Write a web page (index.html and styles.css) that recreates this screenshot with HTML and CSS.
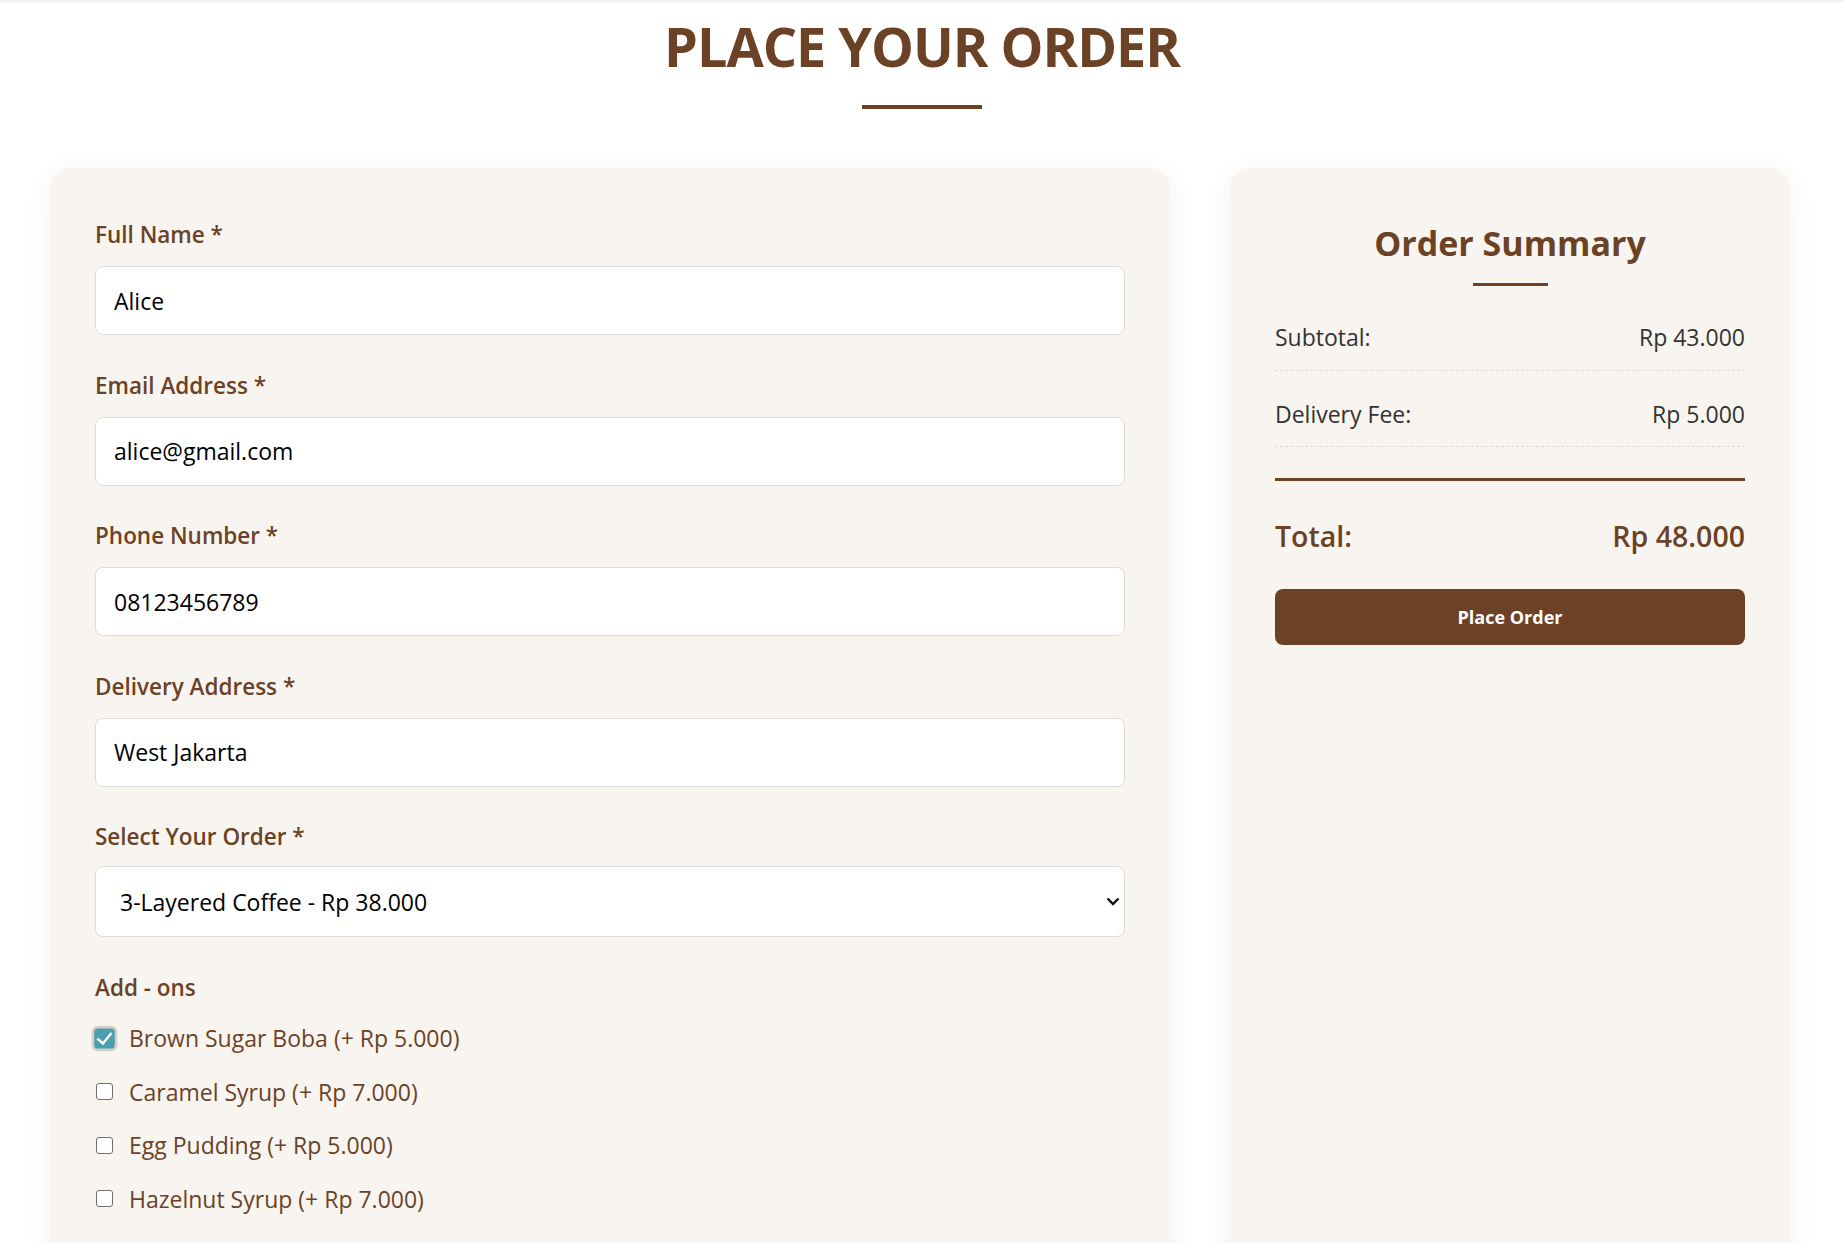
FILE: index.html
```html
<!DOCTYPE html>
<html lang="en">
<head>
<meta charset="utf-8">
<title>Place Your Order</title>
<link rel="stylesheet" href="styles.css">
</head>
<body>
<div class="topbar"></div>
<header class="page-head">
  <h1 class="page-title">PLACE YOUR ORDER</h1>
  <div class="title-rule"></div>
</header>
<main class="order-layout">
  <form class="card order-form">
    <div class="form-group">
      <label class="field-label" for="name">Full Name *</label>
      <input class="field-input" id="name" type="text" value="Alice">
    </div>
    <div class="form-group">
      <label class="field-label" for="email">Email Address *</label>
      <input class="field-input" id="email" type="email" value="alice@gmail.com">
    </div>
    <div class="form-group">
      <label class="field-label" for="phone">Phone Number *</label>
      <input class="field-input" id="phone" type="tel" value="08123456789">
    </div>
    <div class="form-group">
      <label class="field-label" for="address">Delivery Address *</label>
      <input class="field-input" id="address" type="text" value="West Jakarta">
    </div>
    <div class="form-group select-group">
      <label class="field-label" for="menu">Select Your Order *</label>
      <div class="select-wrap">
        <select class="field-select" id="menu">
          <option selected>3-Layered Coffee - Rp 38.000</option>
        </select>
        <svg class="select-chevron" width="14" height="10" viewBox="0 0 14 10"><path d="M1.5 2.5 L7 8 L12.5 2.5" fill="none" stroke="#111" stroke-width="2.4"/></svg>
      </div>
    </div>
    <div class="form-group addons">
      <div class="field-label">Add - ons</div>
      <label class="addon"><input class="addon-check" type="checkbox" checked><span>Brown Sugar Boba (+ Rp 5.000)</span></label>
      <label class="addon"><input class="addon-check" type="checkbox"><span>Caramel Syrup (+ Rp 7.000)</span></label>
      <label class="addon"><input class="addon-check" type="checkbox"><span>Egg Pudding (+ Rp 5.000)</span></label>
      <label class="addon"><input class="addon-check" type="checkbox"><span>Hazelnut Syrup (+ Rp 7.000)</span></label>
    </div>
  </form>
  <aside class="card summary">
    <h2 class="summary-title">Order Summary</h2>
    <div class="summary-rule"></div>
    <div class="summary-row"><span>Subtotal:</span><span>Rp 43.000</span></div>
    <div class="summary-row"><span>Delivery Fee:</span><span>Rp 5.000</span></div>
    <div class="summary-total"><span>Total:</span><span>Rp 48.000</span></div>
    <button class="place-btn" type="button">Place Order</button>
  </aside>
</main>
</body>
</html>
```
FILE: styles.css
```css
* { box-sizing: border-box; }

html, body {
  margin: 0;
  padding: 0;
  background: #ffffff;
}

body {
  font-family: "Segoe UI", "Open Sans", "Noto Sans", sans-serif;
  color: #333;
}

.topbar {
  height: 4px;
  background: linear-gradient(#ececec, #fff);
}

.page-head {
  display: flex;
  flex-direction: column;
  align-items: center;
  padding-top: 6px;
}

.page-title {
  margin: 0;
  font-size: 54px;
  line-height: 72px;
  font-weight: 700;
  color: #6b4226;
  letter-spacing: -1px;
}

.title-rule {
  width: 120px;
  height: 4px;
  background: #6b4226;
  margin-top: 23px;
}

.order-layout {
  display: grid;
  grid-template-columns: 2fr 1fr;
  gap: 60px;
  padding: 0 54px 0 50px;
  margin-top: 59px;
}

.card {
  background: #f8f5f1;
  border-radius: 20px;
  box-shadow: 0 6px 28px rgba(0, 0, 0, 0.06);
}

.order-form {
  padding: 52px 45px 60px;
}

.form-group {
  display: flex;
  flex-direction: column;
  margin-bottom: 35.5px;
}

.field-label {
  font-size: 22.5px;
  line-height: 30px;
  font-weight: 600;
  color: #6b4226;
  margin-bottom: 16px;
}

.select-group .field-label {
  margin-bottom: 14px;
}

.field-input,
.field-select {
  width: 100%;
  height: 69px;
  border: 1px solid #dcdcdc;
  border-radius: 8px;
  background: #fff;
  font-family: inherit;
  font-size: 23px;
  color: #000;
  padding: 0 18px;
  outline: none;
}

.select-wrap {
  position: relative;
}

.field-select {
  height: 71px;
  appearance: none;
  -webkit-appearance: none;
  padding-left: 24px;
}

.select-chevron {
  position: absolute;
  right: 5px;
  top: 30px;
}

.addons .field-label {
  margin-bottom: 9px;
}

.addon {
  display: flex;
  align-items: center;
  gap: 16px;
  height: 53.5px;
  font-size: 23px;
  color: #6b4226;
}

.addon-check {
  appearance: none;
  -webkit-appearance: none;
  margin: 0 0 0 1px;
  width: 17px;
  height: 17px;
  border: 1.5px solid #6f6f6f;
  border-radius: 3px;
  background: #fff;
  position: relative;
  flex: none;
}

.addon-check:checked {
  background: #4a9fb1;
  border-color: #4a9fb1;
  outline: 2px solid #d8cec7;
  transform: scale(1.22);
}

.addon-check:checked::after {
  content: "";
  position: absolute;
  left: 4px;
  top: 0px;
  width: 5px;
  height: 10px;
  border: solid #fff;
  border-width: 0 2.5px 2.5px 0;
  transform: rotate(40deg);
}

.summary {
  padding: 49.5px 45px 45px;
  display: flex;
  flex-direction: column;
  align-items: stretch;
}

.summary-title {
  margin: 0;
  text-align: center;
  font-size: 34px;
  line-height: 50px;
  font-weight: 700;
  color: #6b4226;
}

.summary-rule {
  align-self: center;
  width: 75px;
  height: 3px;
  background: #6b4226;
  margin: 15.5px 0 18px;
}

.summary-row {
  display: flex;
  justify-content: space-between;
  font-size: 23px;
  line-height: 30px;
  color: #333;
  padding: 18px 0 17.5px;
  margin-bottom: 10px;
  border-bottom: 1px dashed #dedad5;
}

.summary-total {
  display: flex;
  justify-content: space-between;
  margin-top: 20.5px;
  border-top: 3px solid #6b4226;
  padding-top: 35.5px;
  font-size: 28.5px;
  line-height: 40px;
  font-weight: 600;
  color: #6b4226;
}

.place-btn {
  margin-top: 33px;
  height: 56px;
  border: none;
  border-radius: 8px;
  background: #6b4226;
  color: #fff;
  font-family: inherit;
  font-size: 18px;
  font-weight: 700;
}
```
